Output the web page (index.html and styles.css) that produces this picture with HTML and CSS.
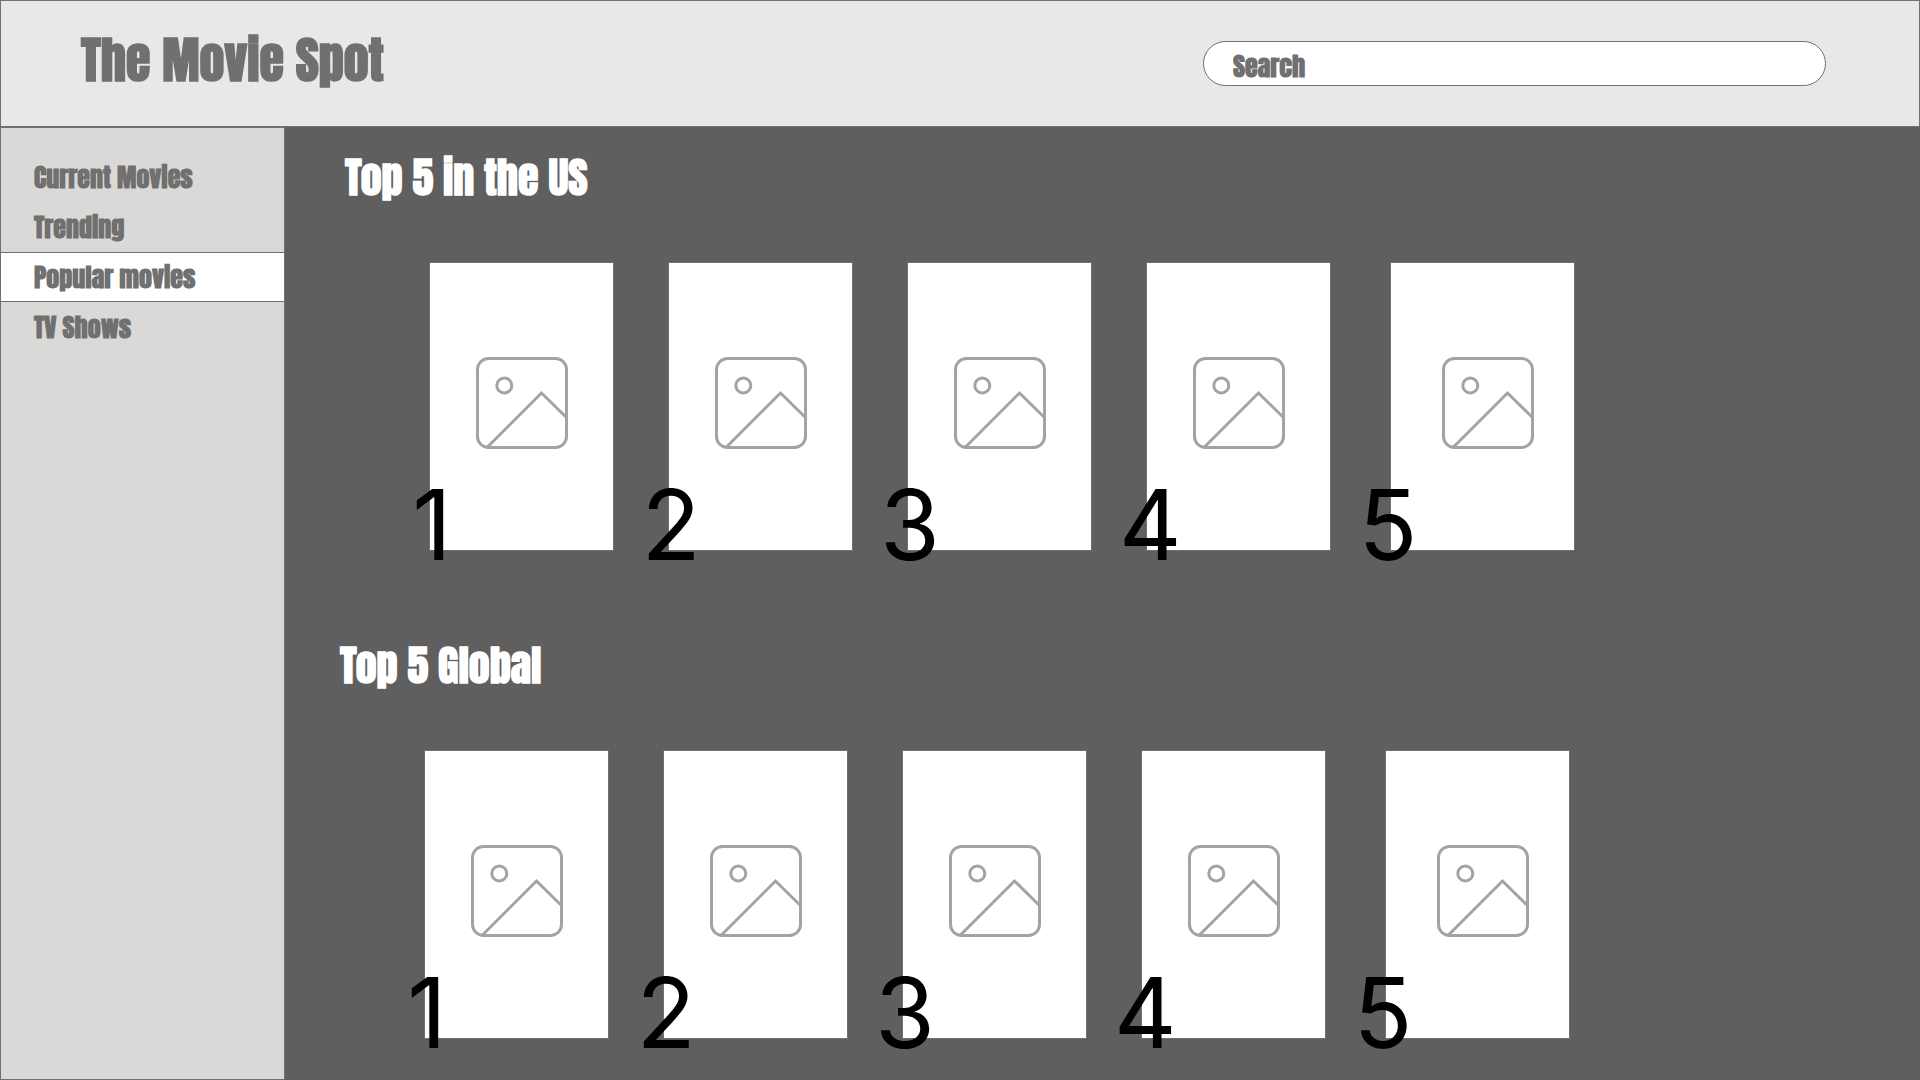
FILE: index.html
```html
<!DOCTYPE html>
<html lang="en">
<head>
<meta charset="utf-8">
<meta name="viewport" content="width=device-width, initial-scale=1">
<title>The Movie Spot</title>
<link rel="stylesheet" href="styles.css">
</head>
<body>
<svg class="sprite" aria-hidden="true">
  <symbol id="picture" viewBox="0 0 92 92">
    <rect x="1.5" y="1.5" width="89" height="89" rx="11"/>
    <circle cx="28.3" cy="28.5" r="7.5"/>
    <path d="M11.5 90 65.5 36 90.5 60.5"/>
  </symbol>
</svg>
<header class="header">
  <h1 class="brand">The Movie Spot</h1>
  <input class="search" type="search" placeholder="Search" aria-label="Search">
</header>
<div class="layout">
  <nav class="sidebar">
    <a class="link" href="#current">Current Movies</a>
    <a class="link" href="#trending">Trending</a>
    <a class="link active" href="#popular" aria-current="page">Popular movies</a>
    <a class="link" href="#tv">TV Shows</a>
  </nav>
  <main class="main">
    <section class="chart chart-us">
      <h2 class="heading">Top 5 in the US</h2>
      <ol class="row">
        <li class="poster"><svg class="icon"><use href="#picture"/></svg><span class="rank">1</span></li>
        <li class="poster"><svg class="icon"><use href="#picture"/></svg><span class="rank">2</span></li>
        <li class="poster"><svg class="icon"><use href="#picture"/></svg><span class="rank">3</span></li>
        <li class="poster"><svg class="icon"><use href="#picture"/></svg><span class="rank">4</span></li>
        <li class="poster last"><svg class="icon"><use href="#picture"/></svg><span class="rank">5</span></li>
      </ol>
    </section>
    <section class="chart">
      <h2 class="heading">Top 5 Global</h2>
      <ol class="row">
        <li class="poster"><svg class="icon"><use href="#picture"/></svg><span class="rank">1</span></li>
        <li class="poster"><svg class="icon"><use href="#picture"/></svg><span class="rank">2</span></li>
        <li class="poster"><svg class="icon"><use href="#picture"/></svg><span class="rank">3</span></li>
        <li class="poster"><svg class="icon"><use href="#picture"/></svg><span class="rank">4</span></li>
        <li class="poster last"><svg class="icon"><use href="#picture"/></svg><span class="rank">5</span></li>
      </ol>
    </section>
  </main>
</div>
</body>
</html>
```
FILE: styles.css
```css
* { box-sizing: border-box; }

body {
  margin: 0;
  min-height: 100vh;
  display: flex;
  flex-direction: column;
  background: #5f5f5f;
  color: #707070;
  font-family: Impact, Anton, "Liberation Sans Narrow", "Liberation Sans", sans-serif;
  font-weight: 700;
}

.sprite { display: none; }

.header {
  display: flex;
  align-items: flex-start;
  justify-content: space-between;
  height: 127px;
  padding: 0 93px 0 80px;
  border: 1px solid #707070;
  background: #e8e8e8;
}

.brand {
  margin: 29px 0 0;
  font-size: 50px;
  line-height: 60px;
  white-space: nowrap;
}

.search {
  flex: 0 1 623px;
  min-width: 0;
  height: 45px;
  margin-top: 40px;
  padding: 4px 29px 0;
  border: 1px solid #707070;
  border-radius: 23px;
  background: #fff;
  color: #707070;
  font: inherit;
  font-size: 26px;
  appearance: none;
}

.search::placeholder { color: #707070; opacity: 1; }

.layout {
  flex: 1;
  display: flex;
}

.sidebar {
  flex: 0 0 285px;
  padding-top: 24px;
  border: 1px solid #707070;
  background: #dad9d7;
}

.link {
  display: block;
  padding: 0 33px;
  border: solid transparent;
  border-width: 1px 0;
  color: #707070;
  font-size: 26px;
  line-height: 48px;
  text-decoration: none;
}

.active {
  border-color: #707070;
  background: #fff;
}

.main {
  flex: 1;
  min-width: 0;
  padding: 26px 0 0 55px;
}

.chart { height: 488px; }
.chart + .chart { height: 439px; }
.chart-us { padding-left: 5px; }

.heading {
  margin: 0 0 59px;
  color: #fff;
  font-size: 42px;
  line-height: 50px;
}

.row {
  display: flex;
  gap: 54px;
  margin: 0;
  padding: 0 0 0 84px;
  list-style: none;
}

.poster {
  position: relative;
  flex: 0 0 185px;
  display: flex;
  align-items: center;
  justify-content: center;
  height: 289px;
  padding-bottom: 7px;
  border: 1px solid #707070;
  background: #fff;
}

.last {
  margin-left: 5px;
  padding-left: 11px;
}

.icon {
  width: 92px;
  height: 92px;
  fill: none;
  stroke: #a3a3a3;
  stroke-width: 3;
}

.rank {
  position: absolute;
  left: -28px;
  bottom: -33px;
  width: 60px;
  color: #000;
  font: 400 97px/116px Inter, sans-serif;
  text-align: center;
}

.last .rank { left: -33px; }
```
